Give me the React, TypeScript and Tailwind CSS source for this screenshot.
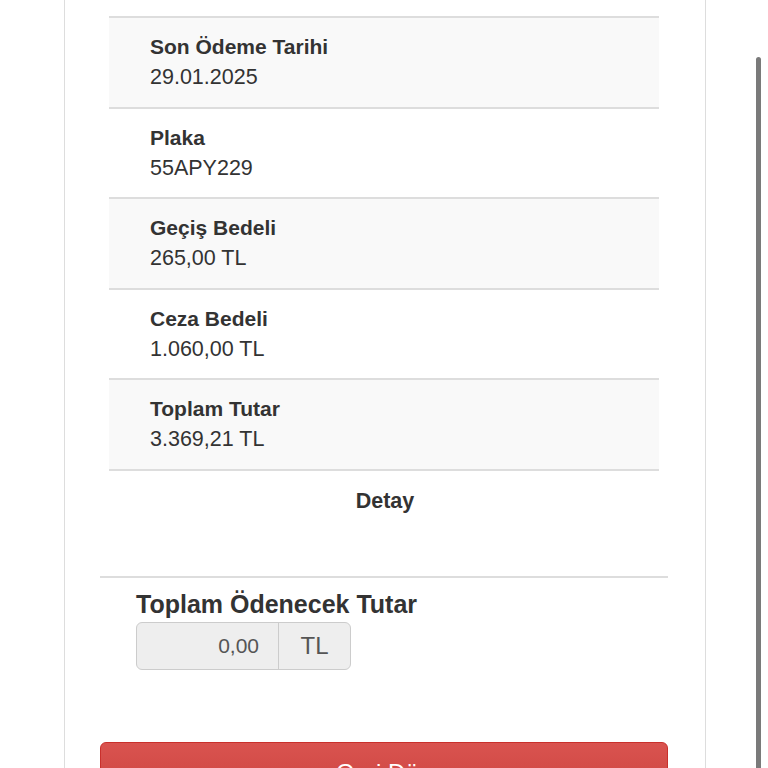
const rows = [
  { label: "Son Ödeme Tarihi", value: "29.01.2025" },
  { label: "Plaka", value: "55APY229" },
  { label: "Geçiş Bedeli", value: "265,00 TL" },
  { label: "Ceza Bedeli", value: "1.060,00 TL" },
  { label: "Toplam Tutar", value: "3.369,21 TL" },
];

export default function App() {
  return (
    <div
      className="relative h-[768px] w-[768px] overflow-hidden bg-white text-[#333]"
      style={{ fontFamily: '"Liberation Sans", Arial, sans-serif' }}
    >
      {/* card */}
      <div className="ml-[64px] h-full w-[642px] border-x border-[#ddd] pt-[16px]">
        {/* details table */}
        <div className="ml-[44px] w-[550px] border-b-2 border-[#ddd]">
          {rows.map((r, i) => (
            <div
              key={r.label}
              className={`h-[90.5px] border-t-2 border-[#ddd] pl-[41px] pt-[14px] ${
                i % 2 === 0 ? "bg-[#f9f9f9]" : "bg-white"
              }`}
            >
              <div className="text-[21px] font-bold leading-[30px]">{r.label}</div>
              <div className="text-[21.5px] leading-[30px]">{r.value}</div>
            </div>
          ))}
        </div>

        <div className="mt-[15px] text-center text-[21.5px] font-bold leading-[30px]">Detay</div>

        <div className="ml-[35px] mt-[60px] w-[568px] border-t-2 border-[#ddd]" />

        {/* total */}
        <div className="ml-[71px] mt-[12px]">
          <div className="text-[25px] font-bold leading-[28px]">Toplam Ödenecek Tutar</div>
          <div className="mt-[4px] flex h-[48px] w-[215px] overflow-hidden rounded-[6px] border border-[#ccc] bg-[#eee]">
            <div className="flex w-[141px] items-center justify-end pr-[19px] text-[21px] text-[#555]">0,00</div>
            <div className="flex flex-1 items-center justify-center border-l border-[#ccc] text-[24px] text-[#555]">TL</div>
          </div>
        </div>

        {/* back button */}
        <div className="ml-[35px] mt-[72px] flex h-[60px] w-[568px] justify-center rounded-[6px] border border-[#c9302c] bg-gradient-to-b from-[#d9534f] to-[#cc433f] pt-[12px] text-[24px] text-white">
          Geri Dön
        </div>
      </div>

      {/* scroll indicator */}
      <div className="absolute left-[756px] top-[57px] h-[720px] w-[5px] rounded-full bg-[#7a7a7a]" />
    </div>
  );
}
